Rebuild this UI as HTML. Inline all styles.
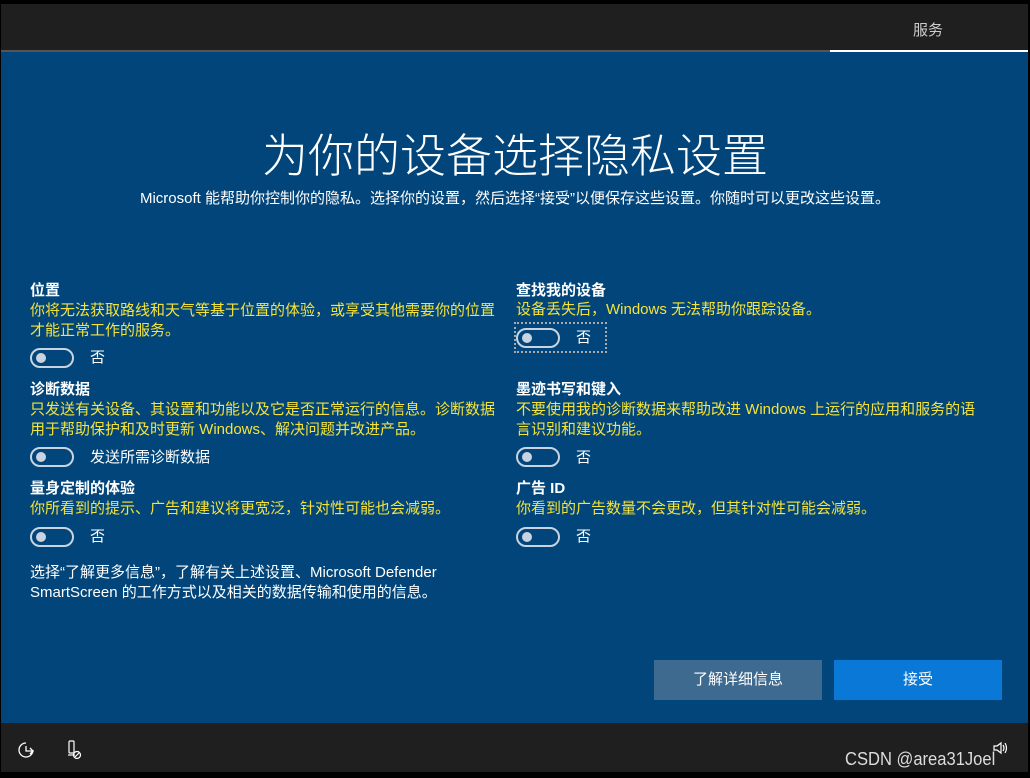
<!DOCTYPE html>
<html><head><meta charset="utf-8"><style>
*{margin:0;padding:0;box-sizing:border-box}
body{width:1030px;height:778px;background:#000;position:relative;overflow:hidden;font-family:"Liberation Sans","Noto Sans CJK SC",sans-serif;color:#fff}
.hdr{position:absolute;left:1px;top:4px;width:1027px;height:46px;background:#1f1f1f}
.ln1{position:absolute;left:1px;top:50px;width:829px;height:2px;background:#555}
.ln2{position:absolute;left:830px;top:50px;width:198px;height:2px;background:#fff}
.main{position:absolute;left:1px;top:52px;width:1027px;height:671px;background:#01457a}
.foot{position:absolute;left:1px;top:723px;width:1027px;height:49px;background:#1f1f1f}
.a{position:absolute;white-space:nowrap}
h1{position:absolute;left:0;width:1030px;top:128px;text-align:center;font-weight:300;font-size:46px;line-height:56px}
.t{font-size:15px;font-weight:bold;line-height:20px}
.y{font-size:15px;color:#f5e33a;line-height:20px}
.w{font-size:15px;line-height:20px}
.tg{position:absolute;width:44px;height:20px;border:2px solid #c8d4e0;border-radius:10px}
.tg::after{content:"";position:absolute;left:4px;top:3px;width:10px;height:10px;border-radius:50%;background:#c8d4e0}
.btn{position:absolute;top:660px;height:40px;width:168px;font-size:15px;text-align:center;line-height:40px}
</style></head><body>
<div class="hdr"></div><div class="ln1"></div><div class="ln2"></div>
<div class="a" style="left:913px;top:19px;font-size:15px;color:#ccc">服务</div>
<div class="main"></div>
<h1>为你的设备选择隐私设置</h1>
<div class="a w" style="left:0;width:1030px;text-align:center;top:189px">Microsoft 能帮助你控制你的隐私。选择你的设置，然后选择“接受”以便保存这些设置。你随时可以更改这些设置。</div>

<div class="a t" style="left:30px;top:281px">位置</div>
<div class="a y" style="left:30px;top:301px">你将无法获取路线和天气等基于位置的体验，或享受其他需要你的位置<br>才能正常工作的服务。</div>
<div class="tg" style="left:30px;top:348px"></div><div class="a w" style="left:90px;top:348px">否</div>

<div class="a t" style="left:30px;top:380px">诊断数据</div>
<div class="a y" style="left:30px;top:400px">只发送有关设备、其设置和功能以及它是否正常运行的信息。诊断数据<br>用于帮助保护和及时更新 Windows、解决问题并改进产品。</div>
<div class="tg" style="left:30px;top:447px"></div><div class="a w" style="left:90px;top:448px">发送所需诊断数据</div>

<div class="a t" style="left:30px;top:479px">量身定制的体验</div>
<div class="a y" style="left:30px;top:499px">你所看到的提示、广告和建议将更宽泛，针对性可能也会减弱。</div>
<div class="tg" style="left:30px;top:527px"></div><div class="a w" style="left:90px;top:527px">否</div>

<div class="a w" style="left:30px;top:563px">选择“了解更多信息”，了解有关上述设置、Microsoft Defender<br>SmartScreen 的工作方式以及相关的数据传输和使用的信息。</div>

<div class="a t" style="left:516px;top:281px">查找我的设备</div>
<div class="a y" style="left:516px;top:300px">设备丢失后，Windows 无法帮助你跟踪设备。</div>
<div style="position:absolute;left:514px;top:322px;width:93px;height:31px;border:2px dotted #aaa"></div>
<div class="tg" style="left:516px;top:328px"></div><div class="a w" style="left:576px;top:328px">否</div>

<div class="a t" style="left:516px;top:380px">墨迹书写和键入</div>
<div class="a y" style="left:516px;top:400px">不要使用我的诊断数据来帮助改进 Windows 上运行的应用和服务的语<br>言识别和建议功能。</div>
<div class="tg" style="left:516px;top:447px"></div><div class="a w" style="left:576px;top:448px">否</div>

<div class="a t" style="left:516px;top:479px">广告 ID</div>
<div class="a y" style="left:516px;top:499px">你看到的广告数量不会更改，但其针对性可能会减弱。</div>
<div class="tg" style="left:516px;top:527px"></div><div class="a w" style="left:576px;top:527px">否</div>

<div class="btn" style="left:654px;background:#3f6a90">了解详细信息</div>
<div class="btn" style="left:834px;background:#0a78d7">接受</div>

<div class="foot"></div>
<svg style="position:absolute;left:16px;top:740px" width="20" height="20" viewBox="0 0 20 20" fill="none" stroke="#fff" stroke-width="1.3"><path d="M10 3a7 7 0 1 0 7 7"/><path d="M10 6v5h7M14 8l3 3-3 3"/></svg>
<svg style="position:absolute;left:66px;top:740px" width="18" height="20" viewBox="0 0 18 20" fill="none" stroke="#fff" stroke-width="1.2"><rect x="3" y="1" width="5" height="12" rx="1"/><path d="M2 15h7"/><circle cx="11" cy="15" r="3.5"/><path d="M9 17l4-4"/></svg>
<svg style="position:absolute;left:992px;top:740px" width="16" height="16" viewBox="0 0 16 16" fill="none" stroke="#fff" stroke-width="1.2"><path d="M2 6h3l4-3v10l-4-3H2z"/><path d="M11 5q2 3 0 6M13 3q3 5 0 10"/></svg>
<div class="a" style="left:845px;top:749px;font-size:18px;color:#ddd;transform:scaleX(0.92);transform-origin:left">CSDN @area31Joel</div>
</body></html>
